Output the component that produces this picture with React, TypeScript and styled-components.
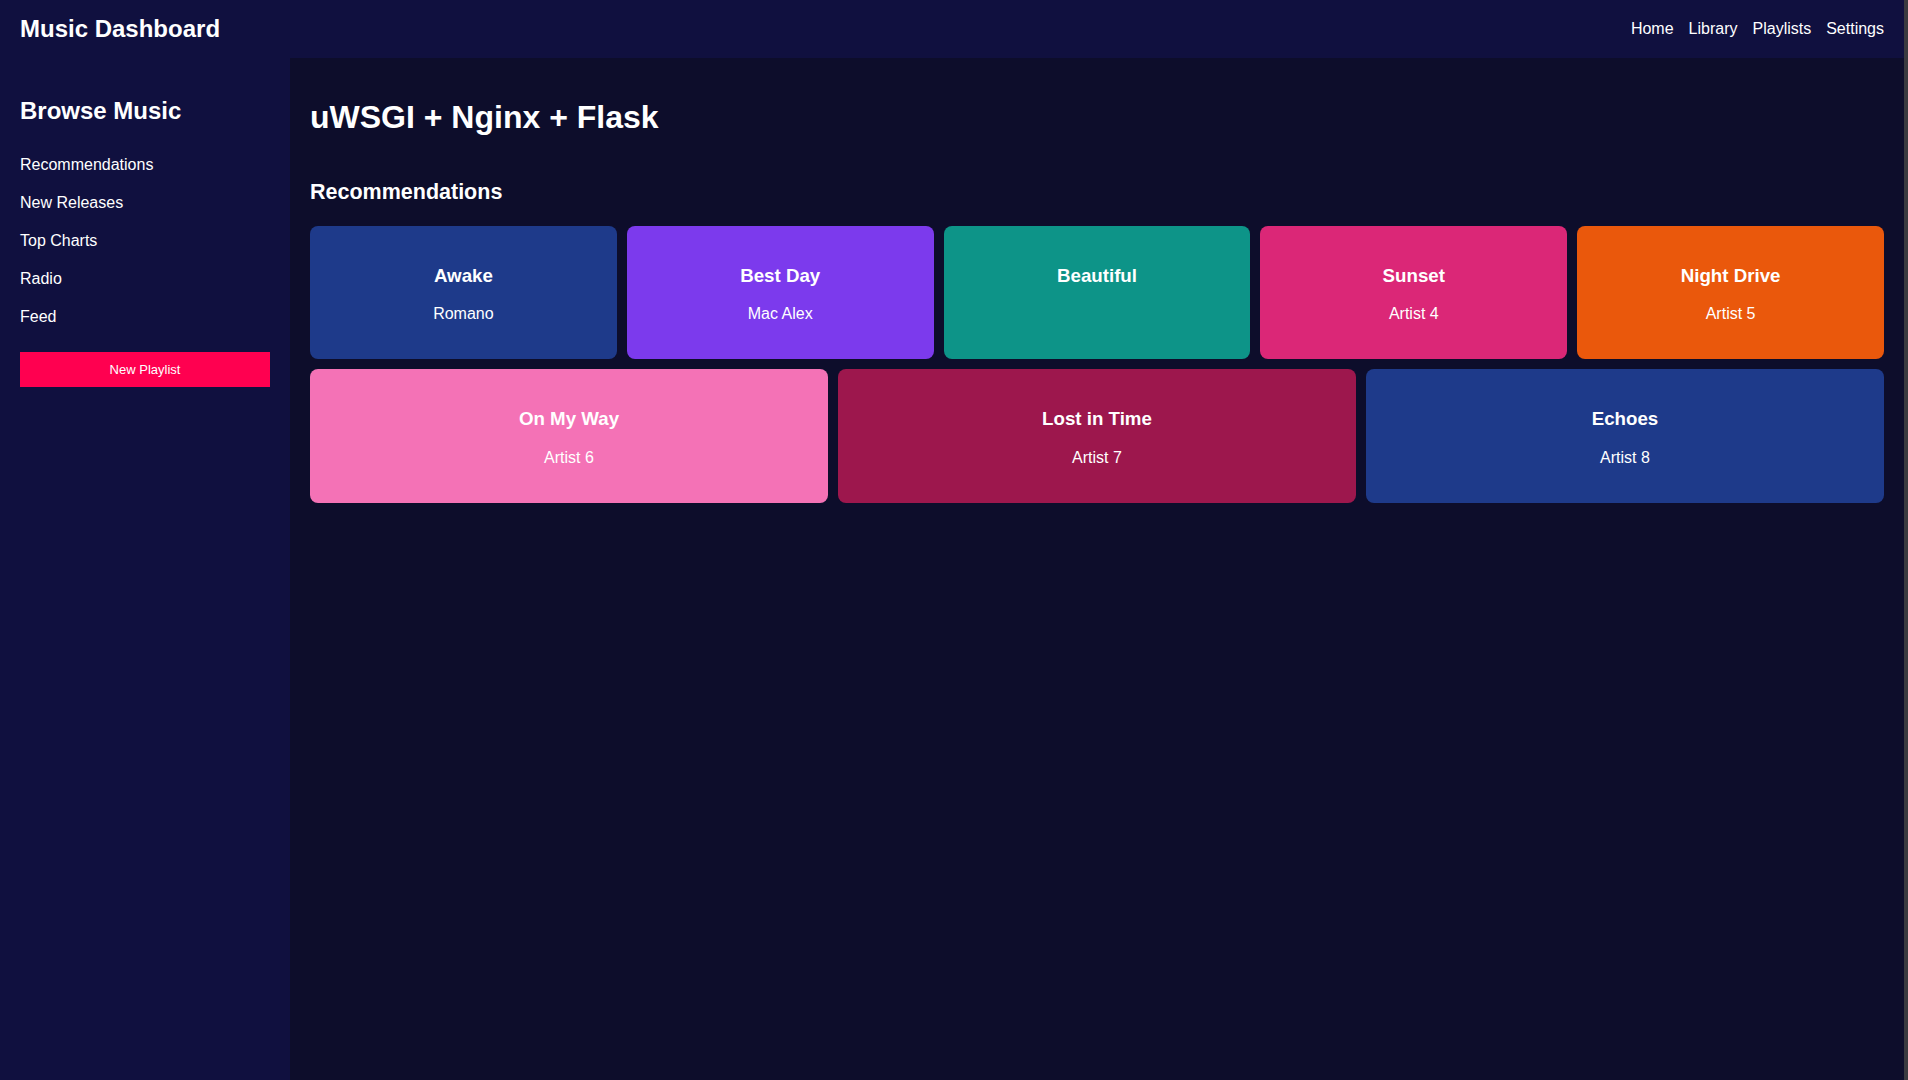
import React from "react";
import styled, { createGlobalStyle } from "styled-components";

const GlobalStyle = createGlobalStyle`
  *, *::before, *::after {
    box-sizing: border-box;
  }
  html, body {
    margin: 0;
    padding: 0;
    height: 100%;
    background: #3a3a3f;
  }
  body {
    font-family: "Liberation Sans", Arial, sans-serif;
    color: #ffffff;
  }
  #root {
    height: 100%;
  }
`;

const Page = styled.div`
  display: flex;
  flex-direction: column;
  height: 1080px;
  width: 1904px;
  background: #0d0d2b;
  overflow: hidden;
`;

const Header = styled.header`
  display: flex;
  align-items: center;
  justify-content: space-between;
  height: 58px;
  padding: 0 20px;
  background: #10103f;
  flex-shrink: 0;
`;

const Brand = styled.h1`
  margin: 0 0 2px;
  font-size: 24px;
  font-weight: 700;
  line-height: 27px;
`;

const Nav = styled.nav`
  display: flex;
  gap: 15px;
`;

const NavLink = styled.a`
  color: #ffffff;
  text-decoration: none;
  font-size: 16px;
`;

const Body = styled.div`
  display: flex;
  flex: 1;
  min-height: 0;
`;

const Sidebar = styled.aside`
  width: 290px;
  flex-shrink: 0;
  background: #10103f;
  padding: 20px;
`;

const SideTitle = styled.h2`
  margin: 19px 0 21px;
  font-size: 24px;
  font-weight: 700;
`;

const SideList = styled.ul`
  list-style: none;
  margin: 0;
  padding: 0;
`;

const SideItem = styled.li`
  padding: 10px 0;
  font-size: 16px;
`;

const NewButton = styled.button`
  display: block;
  width: 250px;
  height: 35px;
  margin-top: 16px;
  border: none;
  background: #ff0050;
  color: #ffffff;
  font-family: "Liberation Sans", Arial, sans-serif;
  font-size: 13px;
  cursor: pointer;
`;

const Main = styled.main`
  flex: 1;
  padding: 20px;
  background: #0d0d2b;
`;

const Title = styled.h1`
  margin: 21px 0 0;
  font-size: 32px;
  font-weight: 700;
`;

const SectionTitle = styled.h2`
  margin: 44px 0 21px;
  font-size: 21.5px;
  font-weight: 700;
`;

const Grid = styled.div`
  display: flex;
  flex-wrap: wrap;
  gap: 10px;
`;

const Card = styled.div<{ $bg: string }>`
  flex: 1 1 280px;
  background: ${(p) => p.$bg};
  border-radius: 8px;
  padding: 20px;
  text-align: center;
`;

const CardTitle = styled.h3`
  margin: 18.72px 0;
  font-size: 18.72px;
  font-weight: 700;
`;

const CardArtist = styled.p`
  margin: 16px 0;
  font-size: 16px;
`;

const songs = [
  { title: "Awake", artist: "Romano", color: "#1e3a8a" },
  { title: "Best Day", artist: "Mac Alex", color: "#7c3aed" },
  { title: "Beautiful", artist: "", color: "#0d9488" },
  { title: "Sunset", artist: "Artist 4", color: "#db2777" },
  { title: "Night Drive", artist: "Artist 5", color: "#ea580c" },
  { title: "On My Way", artist: "Artist 6", color: "#f472b6" },
  { title: "Lost in Time", artist: "Artist 7", color: "#9d174d" },
  { title: "Echoes", artist: "Artist 8", color: "#1e3a8a" },
];

export default function App() {
  return (
    <>
      <GlobalStyle />
      <Page>
        <Header>
          <Brand>Music Dashboard</Brand>
          <Nav>
            <NavLink href="#">Home</NavLink>
            <NavLink href="#">Library</NavLink>
            <NavLink href="#">Playlists</NavLink>
            <NavLink href="#">Settings</NavLink>
          </Nav>
        </Header>
        <Body>
          <Sidebar>
            <SideTitle>Browse Music</SideTitle>
            <SideList>
              <SideItem>Recommendations</SideItem>
              <SideItem>New Releases</SideItem>
              <SideItem>Top Charts</SideItem>
              <SideItem>Radio</SideItem>
              <SideItem>Feed</SideItem>
            </SideList>
            <NewButton>New Playlist</NewButton>
          </Sidebar>
          <Main>
            <Title>uWSGI + Nginx + Flask</Title>
            <SectionTitle>Recommendations</SectionTitle>
            <Grid>
              {songs.map((s) => (
                <Card key={s.title} $bg={s.color}>
                  <CardTitle>{s.title}</CardTitle>
                  {s.artist && <CardArtist>{s.artist}</CardArtist>}
                </Card>
              ))}
            </Grid>
          </Main>
        </Body>
      </Page>
    </>
  );
}
